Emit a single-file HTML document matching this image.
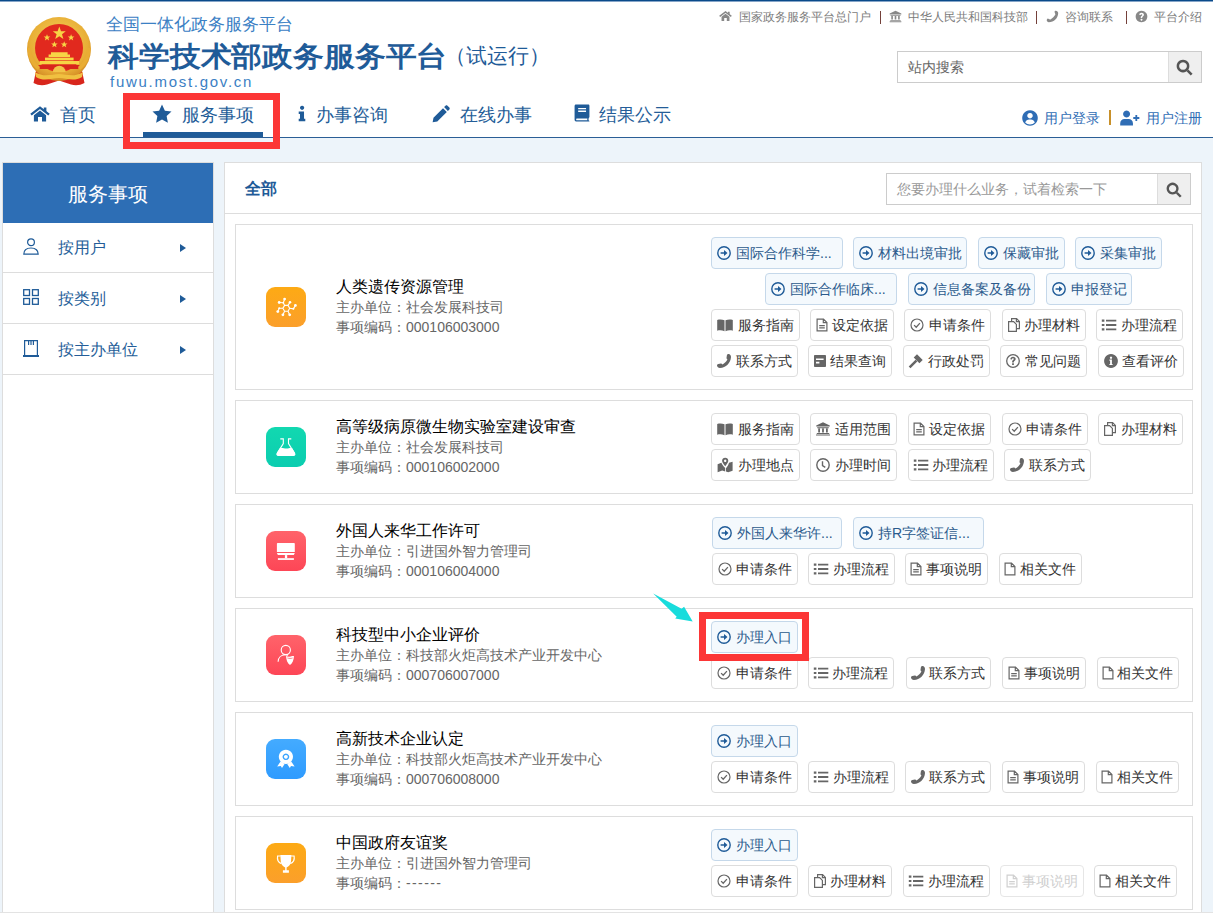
<!DOCTYPE html>
<html><head><meta charset="utf-8"><title>科学技术部政务服务平台</title>
<style>
html,body{margin:0;padding:0}
body{width:1213px;height:914px;overflow:hidden;position:relative;background:#edf4fa;font-family:'Liberation Sans',sans-serif;}
.t{position:absolute;white-space:nowrap}
.btn{position:absolute;height:32px;box-sizing:border-box;border-radius:4px;font-size:14px;line-height:14px;white-space:nowrap}
</style></head><body>
<div style="position:absolute;left:0;top:0;width:1213px;height:137px;background:#fff"></div><div style="position:absolute;left:0px;top:0px;width:1213px;height:1px;box-sizing:border-box;background:#0a4a8a"></div><div style="position:absolute;left:0px;top:1px;width:1213px;height:1px;box-sizing:border-box;background:#85a5c8"></div><div style="position:absolute;left:0px;top:137px;width:1213px;height:1px;box-sizing:border-box;background:#2a5e96"></div><svg style="position:absolute;left:20px;top:12px" width="80" height="80" viewBox="20 12 80 80">
<defs><radialGradient id="gold" cx="50%" cy="40%" r="60%"><stop offset="0" stop-color="#f6d35c"/><stop offset="0.75" stop-color="#e8ae36"/><stop offset="1" stop-color="#d28a24"/></radialGradient></defs>
<path d="M37 66 L33.5 83 Q40 86.5 47 84.5 L59 80.5 L71 84.5 Q78 86.5 84.5 83 L81 66 Z" fill="#d8261c"/>
<circle cx="59" cy="49" r="32" fill="url(#gold)"/>
<circle cx="59" cy="48" r="24" fill="#e1291e"/>
<g fill="#f7d445">
<path d="M59.3 26.6 L61 31.2 L65.8 31.3 L62 34.3 L63.4 39 L59.3 36.3 L55.2 39 L56.6 34.3 L52.8 31.3 L57.6 31.2 Z"/>
<path d="M47 34.3 L47.9 36.5 L50.3 36.6 L48.4 38.1 L49.1 40.4 L47 39 L44.9 40.4 L45.6 38.1 L43.7 36.6 L46.1 36.5 Z"/>
<path d="M71.1 34.3 L72 36.5 L74.4 36.6 L72.5 38.1 L73.2 40.4 L71.1 39 L69 40.4 L69.7 38.1 L67.8 36.6 L70.2 36.5 Z"/>
<path d="M54.4 41.2 L55.3 43.4 L57.7 43.5 L55.8 45 L56.5 47.3 L54.4 45.9 L52.3 47.3 L53 45 L51.1 43.5 L53.5 43.4 Z"/>
<path d="M64.2 41.2 L65.1 43.4 L67.5 43.5 L65.6 45 L66.3 47.3 L64.2 45.9 L62.1 47.3 L62.8 45 L60.9 43.5 L63.3 43.4 Z"/>
<path d="M51 52.2 H67.6 V54.6 H70 V57 H48.6 V54.6 H51 Z"/>
<path d="M45 57.6 H73.6 V60.4 H45 Z"/>
<path d="M39.6 61 H79 V64.2 H39.6 Z"/>
</g>
<path d="M38 65 H80 L78 69 H40 Z" fill="#d8261c"/>
<path d="M53 72 A6.3 6.3 0 0 1 65.6 72 Z" fill="#f2c448"/>
<path d="M35 72 C44 78 52 74 59 74 C66 74 74 78 83 72 L82 77 C74 82 66 78 59 78 C52 78 44 82 36 77 Z" fill="#f0c040"/>
<path d="M27.5 48 C27.5 58 32 66 38 70 L40 67 C35 63 31 56 31 48 Z M90.5 48 C90.5 58 86 66 80 70 L78 67 C83 63 87 56 87 48 Z" fill="#e9ad34"/>
</svg><div class="t" style="left:106px;top:16px;font-size:17px;line-height:17px;color:#3b80c4;">全国一体化政务服务平台</div><div class="t" style="left:108px;top:42px;font-size:31px;line-height:31px;color:#1f5b98;font-weight:bold;transform:scale(0.995,0.906);transform-origin:0 0;">科学技术部政务服务平台</div><div class="t" style="left:445px;top:44.5px;font-size:21px;line-height:21px;color:#1f5b98;">（试运行）</div><div class="t" style="left:110px;top:74px;font-size:15px;line-height:15px;color:#3b80c4;letter-spacing:1.72px;">fuwu.most.gov.cn</div><svg style="position:absolute;left:719px;top:10px;" width="13" height="12" viewBox="0 0 20 16"><g fill="#888" color="#888"><path fill="none" stroke="currentColor" stroke-width="2.3" stroke-linejoin="miter" d="M1 8.6 L10 1.6 L19 8.6"/><path d="M3.9 9.2 L10 4.4 L16.1 9.2 V15.6 H12 V11 H8 V15.6 H3.9 Z M13.8 1.4 H16.4 V6 L13.8 4 Z"/></g></svg><div class="t" style="left:739px;top:11px;font-size:12px;line-height:12px;color:#7b7b7b;">国家政务服务平台总门户</div><div style="position:absolute;left:880px;top:11px;width:1px;height:13px;box-sizing:border-box;background:#74403a"></div><svg style="position:absolute;left:889px;top:10px;" width="13" height="13" viewBox="0 0 16 16"><g fill="#888" color="#888"><path d="M8 1 L0.8 4.2 V5.4 H15.2 V4.2 Z M1.8 6 H14.2 V7 H1.8 Z M2.8 7.4 H4.8 V11.8 H2.8 Z M7 7.4 H9 V11.8 H7 Z M11.2 7.4 H13.2 V11.8 H11.2 Z M1.6 12.3 H14.4 V13.3 H1.6 Z M0.8 13.8 H15.2 V15 H0.8 Z"/></g></svg><div class="t" style="left:908px;top:11px;font-size:12px;line-height:12px;color:#7b7b7b;">中华人民共和国科技部</div><div style="position:absolute;left:1036px;top:11px;width:1px;height:13px;box-sizing:border-box;background:#74403a"></div><svg style="position:absolute;left:1046px;top:10px;" width="13" height="13" viewBox="0 0 16 16"><g fill="#888" color="#888"><path d="M12.2 0.8 C13.6 0.9 15 2.2 15 3.6 C15 9.8 9.8 15 3.4 15 C2.1 15 0.9 13.7 0.9 12.6 C0.9 11.6 1.5 10.9 2.3 10.5 L4.9 11.6 C5.3 11.8 5.6 11.6 5.9 11.3 C8.2 10 10.1 8 11.3 5.8 C11.5 5.4 11.6 5.1 11.4 4.8 L10.4 2.3 C10.7 1.4 11.3 0.8 12.2 0.8 Z"/></g></svg><div class="t" style="left:1065px;top:11px;font-size:12px;line-height:12px;color:#7b7b7b;">咨询联系</div><div style="position:absolute;left:1126px;top:11px;width:1px;height:13px;box-sizing:border-box;background:#74403a"></div><svg style="position:absolute;left:1135px;top:10px;" width="13" height="13" viewBox="0 0 16 16"><g fill="#888" color="#888"><path fill-rule="evenodd" d="M8 0.8 A7.2 7.2 0 1 1 7.99 0.8 Z M8 10.9 A1.1 1.1 0 1 0 8.01 10.9 Z M5.1 5.9 L6.9 6.3 C7 5.6 7.4 5.2 8 5.2 C8.6 5.2 9 5.6 9 6.1 C9 7 7.1 7.2 7.1 9 V9.8 H8.9 V9.3 C8.9 8.2 11 7.8 11 5.9 C11 4.3 9.6 3.4 8 3.4 C6.4 3.4 5.3 4.4 5.1 5.9 Z"/></g></svg><div class="t" style="left:1154px;top:11px;font-size:12px;line-height:12px;color:#7b7b7b;">平台介绍</div><div style="position:absolute;left:897px;top:51px;width:305px;height:32px;box-sizing:border-box;border:1px solid #ccc;background:#fff"></div><div style="position:absolute;left:1168px;top:52px;width:33px;height:30px;box-sizing:border-box;background:#efefef;border-left:1px solid #ddd"></div><div class="t" style="left:908px;top:60px;font-size:14px;line-height:14px;color:#666;">站内搜索</div><svg style="position:absolute;left:1176px;top:59px;" width="17" height="17" viewBox="0 0 16 16"><g fill="#555" color="#555"><path fill-rule="evenodd" d="M6.6 0.6 A6 6 0 1 1 6.59 0.6 Z M6.6 3 A3.6 3.6 0 1 0 6.61 3 Z"/><path d="M9.9 11.6 L11.6 9.9 L15.6 13.9 L13.9 15.6 Z"/></g></svg><svg style="position:absolute;left:30px;top:106px;" width="20" height="16" viewBox="0 0 20 16"><g fill="#1f5b98" color="#1f5b98"><path fill="none" stroke="currentColor" stroke-width="2.3" stroke-linejoin="miter" d="M1 8.6 L10 1.6 L19 8.6"/><path d="M3.9 9.2 L10 4.4 L16.1 9.2 V15.6 H12 V11 H8 V15.6 H3.9 Z M13.8 1.4 H16.4 V6 L13.8 4 Z"/></g></svg><div class="t" style="left:60px;top:106px;font-size:18px;line-height:18px;color:#245d98;">首页</div><svg style="position:absolute;left:152px;top:104px;" width="20" height="20" viewBox="0 0 16 16"><g fill="#1f5b98" color="#1f5b98"><path d="M8 0.4 L10.3 5.3 L15.6 5.9 L11.7 9.6 L12.7 14.9 L8 12.3 L3.3 14.9 L4.3 9.6 L0.4 5.9 L5.7 5.3 Z"/></g></svg><div class="t" style="left:182px;top:106px;font-size:18px;line-height:18px;color:#245d98;">服务事项</div><svg style="position:absolute;left:297px;top:105px;" width="10" height="17" viewBox="0 0 9 16"><g fill="#1f5b98" color="#1f5b98"><path d="M4.6 0.6 A2 2 0 1 1 4.59 0.6 Z M1.4 6 H6.4 V13 H7.6 V15.4 H1.4 V13 H2.6 V8.4 H1.4 Z"/></g></svg><div class="t" style="left:316px;top:106px;font-size:18px;line-height:18px;color:#245d98;">办事咨询</div><svg style="position:absolute;left:432px;top:105px;" width="18" height="18" viewBox="0 0 17 17"><g fill="#1f5b98" color="#1f5b98"><path d="M0.6 16.4 L1.4 12 L10.4 3 L14 6.6 L5 15.6 Z M11.4 2 L12.8 0.6 C13.3 0.1 14.1 0.1 14.6 0.6 L16.4 2.4 C16.9 2.9 16.9 3.7 16.4 4.2 L15 5.6 Z"/></g></svg><div class="t" style="left:460px;top:106px;font-size:18px;line-height:18px;color:#245d98;">在线办事</div><svg style="position:absolute;left:573px;top:104px;" width="18" height="18" viewBox="0 0 16 16"><g fill="#1f5b98" color="#1f5b98"><path fill-rule="evenodd" d="M2.6 0.5 H13.6 C14.2 0.5 14.6 0.9 14.6 1.5 V11.6 C14.6 12 14.3 12.3 14 12.4 C13.7 13.2 13.7 14 14 14.7 C14.4 14.8 14.6 15.1 14.6 15.5 H2.8 C1.9 15.5 1.4 14.8 1.4 13.8 V1.8 C1.4 1.1 1.9 0.5 2.6 0.5 Z M3.4 12.8 C3 12.8 2.8 13.2 2.8 13.7 C2.8 14.2 3 14.5 3.4 14.5 H12.8 C12.6 13.9 12.6 13.3 12.8 12.8 Z M4.6 3.5 H11.6 V4.7 H4.6 Z M4.6 5.8 H11.6 V7 H4.6 Z"/></g></svg><div class="t" style="left:599px;top:106px;font-size:18px;line-height:18px;color:#245d98;">结果公示</div><div style="position:absolute;left:143px;top:132px;width:120px;height:5px;box-sizing:border-box;background:#1f5b98"></div><svg style="position:absolute;left:1022px;top:110px;" width="16" height="16" viewBox="0 0 16 16"><g fill="#2f6db5" color="#2f6db5"><path fill-rule="evenodd" d="M8 0.2 A7.8 7.8 0 1 1 7.99 0.2 Z M8 3 A2.7 2.7 0 1 0 8.01 3 Z M3.2 12.4 C4.4 13.7 6.1 14.4 8 14.4 C9.9 14.4 11.6 13.7 12.8 12.4 C12.2 10.6 10.6 9.5 8.9 9.5 H7.1 C5.4 9.5 3.8 10.6 3.2 12.4 Z"/></g></svg><div class="t" style="left:1044px;top:110.5px;font-size:14px;line-height:14px;color:#2f6db5;">用户登录</div><div style="position:absolute;left:1109px;top:110px;width:2px;height:15px;box-sizing:border-box;background:#c8902a"></div><svg style="position:absolute;left:1119px;top:109px;" width="21" height="17" viewBox="0 0 19.5 16"><g fill="#2f6db5" color="#2f6db5"><path d="M7 1.4 A3.3 3.3 0 1 1 6.99 1.4 Z M1 15.6 V13.6 C1 11 2.8 9.4 5 9.4 H9 C11.2 9.4 13 11 13 13.6 V15.6 Z M15.3 5.6 H17 V7.6 H19 V9.3 H17 V11.3 H15.3 V9.3 H13.3 V7.6 H15.3 Z"/></g></svg><div class="t" style="left:1146px;top:110.5px;font-size:14px;line-height:14px;color:#2f6db5;">用户注册</div><div style="position:absolute;left:123px;top:93px;width:157px;height:56px;box-sizing:border-box;border:7px solid #fc3636"></div><div style="position:absolute;left:2px;top:162px;width:212px;height:751px;box-sizing:border-box;background:#fff;border:1px solid #ddd"></div><div style="position:absolute;left:3px;top:163px;width:210px;height:60px;box-sizing:border-box;background:#2d6eb5"></div><div class="t" style="left:68px;top:184px;font-size:20px;line-height:20px;color:#fff;">服务事项</div><div style="position:absolute;left:3px;top:272px;width:210px;height:1px;box-sizing:border-box;background:#ddd"></div><div class="t" style="left:58px;top:240px;font-size:16px;line-height:16px;color:#245d98;">按用户</div><svg style="position:absolute;left:180px;top:244px;" width="6" height="8" viewBox="0 0 6 8"><path d="M0 0 L6 4 L0 8 Z" fill="#1f5b98"/></svg><div style="position:absolute;left:3px;top:323px;width:210px;height:1px;box-sizing:border-box;background:#ddd"></div><div class="t" style="left:58px;top:291px;font-size:16px;line-height:16px;color:#245d98;">按类别</div><svg style="position:absolute;left:180px;top:295px;" width="6" height="8" viewBox="0 0 6 8"><path d="M0 0 L6 4 L0 8 Z" fill="#1f5b98"/></svg><div style="position:absolute;left:3px;top:374px;width:210px;height:1px;box-sizing:border-box;background:#ddd"></div><div class="t" style="left:58px;top:342px;font-size:16px;line-height:16px;color:#245d98;">按主办单位</div><svg style="position:absolute;left:180px;top:346px;" width="6" height="8" viewBox="0 0 6 8"><path d="M0 0 L6 4 L0 8 Z" fill="#1f5b98"/></svg><svg style="position:absolute;left:23px;top:238px;" width="16" height="17" viewBox="0 0 16 17"><g fill="none" stroke="#1f5b98" stroke-width="1.2"><circle cx="8" cy="4.2" r="3.4"/><path d="M0.8 16.2 C0.8 12 4 10 8 10 C12 10 15.2 12 15.2 16.2 Z"/></g></svg><svg style="position:absolute;left:23px;top:289px;" width="16" height="16" viewBox="0 0 16 16"><g fill="none" stroke="#1f5b98" stroke-width="1.3"><rect x="0.7" y="0.7" width="5.8" height="5.8"/><rect x="9.5" y="0.7" width="5.8" height="5.8"/><rect x="0.7" y="9.5" width="5.8" height="5.8"/><rect x="9.5" y="9.5" width="5.8" height="5.8"/></g></svg><svg style="position:absolute;left:23px;top:340px;" width="16" height="17" viewBox="0 0 16 17"><g fill="none" stroke="#1f5b98" stroke-width="1.2"><path d="M1.6 15.6 V0.6 H14.4 V15.6"/><path d="M5.6 1 V5 M8 1 V5 M10.4 1 V5"/></g><rect x="0" y="15" width="16" height="2" fill="#1f5b98"/></svg><div style="position:absolute;left:224px;top:162px;width:978px;height:751px;box-sizing:border-box;background:#fff;border:1px solid #ddd"></div><div style="position:absolute;left:225px;top:213px;width:976px;height:1px;box-sizing:border-box;background:#ddd"></div><div class="t" style="left:245px;top:180.5px;font-size:16px;line-height:16px;color:#1f5b98;font-weight:bold;">全部</div><div style="position:absolute;left:886px;top:173px;width:305px;height:32px;box-sizing:border-box;border:1px solid #ccc;background:#fff"></div><div style="position:absolute;left:1157px;top:174px;width:33px;height:30px;box-sizing:border-box;background:#efefef;border-left:1px solid #ddd"></div><div class="t" style="left:897px;top:182px;font-size:14px;line-height:14px;color:#999;">您要办理什么业务，试着检索一下</div><svg style="position:absolute;left:1166px;top:182px;" width="16" height="16" viewBox="0 0 16 16"><g fill="#555" color="#555"><path fill-rule="evenodd" d="M6.6 0.6 A6 6 0 1 1 6.59 0.6 Z M6.6 3 A3.6 3.6 0 1 0 6.61 3 Z"/><path d="M9.9 11.6 L11.6 9.9 L15.6 13.9 L13.9 15.6 Z"/></g></svg><div style="position:absolute;left:0px;top:912px;width:1213px;height:1px;box-sizing:border-box;background:#e3e3e3"></div><div style="position:absolute;left:0px;top:913px;width:1213px;height:1px;box-sizing:border-box;background:#fff"></div><div style="position:absolute;left:235px;top:224px;width:958px;height:166px;box-sizing:border-box;border:1px solid #ddd;background:#fff"></div><div style="position:absolute;left:266px;top:287px;width:40px;height:40px;border-radius:9px;background:linear-gradient(#fdaa14,#fb9f2b)"><svg width="40" height="40" viewBox="0 0 40 40"><g stroke="#fff" stroke-width="1.1" fill="none"><path d="M23.7 21.3 L22 18.4 L18.6 18.4 L16.9 21.3 L18.6 24.2 L22 24.2 Z"/><path d="M18.6 18.4 L17.3 15.8 L18.6 12.1 M17.3 15.8 L13.2 15.5 M22 18.4 L24 15.2 M23.7 21.3 L27.4 21.8 L29.4 18.4 M16.9 21.3 L13.2 21.2 L11.8 24.6 M18.6 24.2 L16.9 27.8 M22 24.2 L23.7 27.8"/></g><g fill="#fff"><circle cx="18.6" cy="12.1" r="1.4"/><circle cx="13.2" cy="15.5" r="1.4"/><circle cx="24" cy="15.2" r="1.3"/><circle cx="29.4" cy="18.4" r="1.4"/><circle cx="27.4" cy="21.8" r="1"/><circle cx="13.2" cy="21.2" r="1"/><circle cx="11.8" cy="24.6" r="1.4"/><circle cx="16.9" cy="27.8" r="1.4"/><circle cx="23.7" cy="27.8" r="1.4"/><circle cx="17.3" cy="15.8" r="0.9"/></g></svg></div><div class="t" style="left:336px;top:279px;font-size:16px;line-height:16px;color:#000;">人类遗传资源管理</div><div class="t" style="left:336px;top:300px;font-size:14px;line-height:14px;color:#666;">主办单位：社会发展科技司</div><div class="t" style="left:336px;top:320px;font-size:14px;line-height:14px;color:#666;">事项编码：000106003000</div><div class="btn" style="left:711px;top:237px;width:132px;border:1px solid #c5d8ea;background:#f4f9fd;color:#2b5a8c;"><svg width="16" height="16" viewBox="0 0 16 16" style="position:absolute;left:4.0px;top:7px"><g fill="#1f5b98" color="#1f5b98"><circle cx="8" cy="8" r="6.2" fill="none" stroke="currentColor" stroke-width="1.4"/><path d="M4.6 7.2 H8 V5 L11.5 8 L8 11 V8.8 H4.6 Z"/></g></svg><span style="position:absolute;left:24px;top:8px">国际合作科学...</span></div><div class="btn" style="left:853px;top:237px;width:114px;border:1px solid #c5d8ea;background:#f4f9fd;color:#2b5a8c;"><svg width="16" height="16" viewBox="0 0 16 16" style="position:absolute;left:4.0px;top:7px"><g fill="#1f5b98" color="#1f5b98"><circle cx="8" cy="8" r="6.2" fill="none" stroke="currentColor" stroke-width="1.4"/><path d="M4.6 7.2 H8 V5 L11.5 8 L8 11 V8.8 H4.6 Z"/></g></svg><span style="position:absolute;left:24px;top:8px">材料出境审批</span></div><div class="btn" style="left:978px;top:237px;width:87px;border:1px solid #c5d8ea;background:#f4f9fd;color:#2b5a8c;"><svg width="16" height="16" viewBox="0 0 16 16" style="position:absolute;left:4.0px;top:7px"><g fill="#1f5b98" color="#1f5b98"><circle cx="8" cy="8" r="6.2" fill="none" stroke="currentColor" stroke-width="1.4"/><path d="M4.6 7.2 H8 V5 L11.5 8 L8 11 V8.8 H4.6 Z"/></g></svg><span style="position:absolute;left:24px;top:8px">保藏审批</span></div><div class="btn" style="left:1075px;top:237px;width:87px;border:1px solid #c5d8ea;background:#f4f9fd;color:#2b5a8c;"><svg width="16" height="16" viewBox="0 0 16 16" style="position:absolute;left:4.0px;top:7px"><g fill="#1f5b98" color="#1f5b98"><circle cx="8" cy="8" r="6.2" fill="none" stroke="currentColor" stroke-width="1.4"/><path d="M4.6 7.2 H8 V5 L11.5 8 L8 11 V8.8 H4.6 Z"/></g></svg><span style="position:absolute;left:24px;top:8px">采集审批</span></div><div class="btn" style="left:765px;top:273px;width:132px;border:1px solid #c5d8ea;background:#f4f9fd;color:#2b5a8c;"><svg width="16" height="16" viewBox="0 0 16 16" style="position:absolute;left:4.0px;top:7px"><g fill="#1f5b98" color="#1f5b98"><circle cx="8" cy="8" r="6.2" fill="none" stroke="currentColor" stroke-width="1.4"/><path d="M4.6 7.2 H8 V5 L11.5 8 L8 11 V8.8 H4.6 Z"/></g></svg><span style="position:absolute;left:24px;top:8px">国际合作临床...</span></div><div class="btn" style="left:908px;top:273px;width:127px;border:1px solid #c5d8ea;background:#f4f9fd;color:#2b5a8c;"><svg width="16" height="16" viewBox="0 0 16 16" style="position:absolute;left:4.0px;top:7px"><g fill="#1f5b98" color="#1f5b98"><circle cx="8" cy="8" r="6.2" fill="none" stroke="currentColor" stroke-width="1.4"/><path d="M4.6 7.2 H8 V5 L11.5 8 L8 11 V8.8 H4.6 Z"/></g></svg><span style="position:absolute;left:24px;top:8px">信息备案及备份</span></div><div class="btn" style="left:1046px;top:273px;width:86px;border:1px solid #c5d8ea;background:#f4f9fd;color:#2b5a8c;"><svg width="16" height="16" viewBox="0 0 16 16" style="position:absolute;left:4.0px;top:7px"><g fill="#1f5b98" color="#1f5b98"><circle cx="8" cy="8" r="6.2" fill="none" stroke="currentColor" stroke-width="1.4"/><path d="M4.6 7.2 H8 V5 L11.5 8 L8 11 V8.8 H4.6 Z"/></g></svg><span style="position:absolute;left:24px;top:8px">申报登记</span></div><div class="btn" style="left:711px;top:309px;width:89px;border:1px solid #ddd;background:#fff;color:#333;"><svg width="16" height="16" viewBox="0 0 16 16" style="position:absolute;left:5.0px;top:7px"><g fill="#666" color="#666"><path d="M0.2 2.9 C2.7 2.1 5.2 2.3 7.5 3.2 V14.2 C5.2 13.2 2.7 13 0.2 13.7 Z M8.5 3.2 C10.8 2.3 13.3 2.1 15.8 2.9 V13.7 C13.3 13 10.8 13.2 8.5 14.2 Z"/></g></svg><span style="position:absolute;left:26px;top:8px">服务指南</span></div><div class="btn" style="left:810px;top:309px;width:84px;border:1px solid #ddd;background:#fff;color:#333;"><svg width="16" height="16" viewBox="0 0 16 16" style="position:absolute;left:2.5px;top:7px"><g fill="#666" color="#666"><path fill="none" stroke="currentColor" stroke-width="1.2" d="M3.1 2.1 H9.5 L12.9 5.5 V13.9 H3.1 Z M9.3 2.1 V5.7 H12.9"/><path d="M5.2 8 H10.8 V9.2 H5.2 Z M5.2 10.3 H10.8 V11.5 H5.2 Z"/></g></svg><span style="position:absolute;left:21px;top:8px">设定依据</span></div><div class="btn" style="left:904px;top:309px;width:87px;border:1px solid #ddd;background:#fff;color:#333;"><svg width="16" height="16" viewBox="0 0 16 16" style="position:absolute;left:4.0px;top:7px"><g fill="#666" color="#666"><circle cx="8" cy="8" r="6" fill="none" stroke="currentColor" stroke-width="1.2"/><path fill="none" stroke="currentColor" stroke-width="1.3" d="M5.1 8.1 L7.2 10.2 L10.9 6.1"/></g></svg><span style="position:absolute;left:24px;top:8px">申请条件</span></div><div class="btn" style="left:1002px;top:309px;width:84px;border:1px solid #ddd;background:#fff;color:#333;"><svg width="16" height="16" viewBox="0 0 16 16" style="position:absolute;left:2.5px;top:7px"><g fill="#666" color="#666"><path fill="none" stroke="currentColor" stroke-width="1.2" d="M5.6 4.4 V1.6 H10.6 L13.4 4.4 V11.6 H10.4 M10.4 1.6 V4.6 H13.4 M2.6 4.6 H7.6 L10.4 7.4 V14.4 H2.6 Z"/></g></svg><span style="position:absolute;left:21px;top:8px">办理材料</span></div><div class="btn" style="left:1096px;top:309px;width:87px;border:1px solid #ddd;background:#fff;color:#333;"><svg width="16" height="16" viewBox="0 0 16 16" style="position:absolute;left:4.0px;top:7px"><g fill="#666" color="#666"><path d="M0.8 2.5 H3.4 V4.7 H0.8 Z M0.8 6.9 H3.4 V9.1 H0.8 Z M0.8 11.3 H3.4 V13.5 H0.8 Z M5 2.7 H15.3 V4.5 H5 Z M5 7.1 H15.3 V8.9 H5 Z M5 11.5 H15.3 V13.3 H5 Z"/></g></svg><span style="position:absolute;left:24px;top:8px">办理流程</span></div><div class="btn" style="left:711px;top:345px;width:87px;border:1px solid #ddd;background:#fff;color:#333;"><svg width="16" height="16" viewBox="0 0 16 16" style="position:absolute;left:4.0px;top:7px"><g fill="#666" color="#666"><path d="M12.6 1 C14 1.2 15 2.4 15 3.9 C14.6 10 10 14.6 3.9 15 C2.4 15 1.2 14 1 12.6 C1 11.8 1.5 11.1 2.3 10.9 L4.9 10.5 C5.5 10.4 6 10.8 6.3 11.4 C8.7 10.4 10.4 8.7 11.4 6.3 C10.8 6 10.4 5.5 10.5 4.9 L10.9 2.3 C11.1 1.5 11.8 1 12.6 1 Z"/></g></svg><span style="position:absolute;left:24px;top:8px">联系方式</span></div><div class="btn" style="left:808px;top:345px;width:84px;border:1px solid #ddd;background:#fff;color:#333;"><svg width="16" height="16" viewBox="0 0 16 16" style="position:absolute;left:2.5px;top:7px"><g fill="#666" color="#666"><path fill-rule="evenodd" d="M2.8 2 H13.2 C13.6 2 14 2.4 14 2.8 V13.2 C14 13.6 13.6 14 13.2 14 H2.8 C2.4 14 2 13.6 2 13.2 V2.8 C2 2.4 2.4 2 2.8 2 Z M4 5.4 V7 H11.6 V5.4 Z M4 8.8 V10.4 H7.4 V8.8 Z"/></g></svg><span style="position:absolute;left:21px;top:8px">结果查询</span></div><div class="btn" style="left:903px;top:345px;width:87px;border:1px solid #ddd;background:#fff;color:#333;"><svg width="16" height="16" viewBox="0 0 16 16" style="position:absolute;left:4.0px;top:7px"><g fill="#666" color="#666"><path d="M9 1.3 L14.7 7 L11.4 10.3 L5.7 4.6 Z M9.3 8.5 L2.5 15.3 L0.7 13.5 L7.5 6.7 Z"/></g></svg><span style="position:absolute;left:24px;top:8px">行政处罚</span></div><div class="btn" style="left:1000px;top:345px;width:87px;border:1px solid #ddd;background:#fff;color:#333;"><svg width="16" height="16" viewBox="0 0 16 16" style="position:absolute;left:4.0px;top:7px"><g fill="#666" color="#666"><circle cx="8" cy="8" r="6.3" fill="none" stroke="currentColor" stroke-width="1.3"/><path d="M7.1 10.3 H8.9 V12 H7.1 Z M5.3 6.3 C5.4 4.7 6.5 3.8 8 3.8 C9.6 3.8 10.7 4.8 10.7 6 C10.7 7.6 8.9 7.8 8.9 9 V9.4 H7.1 V8.8 C7.1 7.2 8.9 7 8.9 6.1 C8.9 5.6 8.5 5.3 8 5.3 C7.4 5.3 7 5.8 7 6.5 Z"/></g></svg><span style="position:absolute;left:24px;top:8px">常见问题</span></div><div class="btn" style="left:1098px;top:345px;width:86px;border:1px solid #ddd;background:#fff;color:#333;"><svg width="16" height="16" viewBox="0 0 16 16" style="position:absolute;left:3.5px;top:7px"><g fill="#666" color="#666"><path fill-rule="evenodd" d="M8 1.1 A6.9 6.9 0 1 1 7.99 1.1 Z M8 3.6 A1.15 1.15 0 1 0 8.01 3.6 Z M6.4 6.6 V7.7 H7.1 V11 H6.4 V12.1 H9.6 V11 H8.9 V6.6 Z"/></g></svg><span style="position:absolute;left:23px;top:8px">查看评价</span></div><div style="position:absolute;left:235px;top:400px;width:958px;height:94px;box-sizing:border-box;border:1px solid #ddd;background:#fff"></div><div style="position:absolute;left:266px;top:427px;width:40px;height:40px;border-radius:9px;background:linear-gradient(#12d8b0,#0bcdb0)"><svg width="40" height="40" viewBox="0 0 40 40"><g fill="none" stroke="#fff" stroke-width="1.1"><path d="M14.3 11.9 H17.3 V16.6 L11.2 26.4 C10.6 27.5 11.1 28.4 12.2 28.4 H27.6 C28.7 28.4 29.2 27.5 28.6 26.4 L22.5 16.6 V11.9 H25.3"/></g><path fill="#fff" d="M13.6 21.4 C16 20.2 18.4 21.8 20.6 21.6 C22.8 21.4 24 20.6 26.2 21.2 L28.8 25.8 C29.6 27.2 29 28.6 27.6 28.6 H12.2 C10.8 28.6 10.2 27.2 11 25.8 Z"/></svg></div><div class="t" style="left:336px;top:419px;font-size:16px;line-height:16px;color:#000;">高等级病原微生物实验室建设审查</div><div class="t" style="left:336px;top:440px;font-size:14px;line-height:14px;color:#666;">主办单位：社会发展科技司</div><div class="t" style="left:336px;top:460px;font-size:14px;line-height:14px;color:#666;">事项编码：000106002000</div><div class="btn" style="left:711px;top:413px;width:89px;border:1px solid #ddd;background:#fff;color:#333;"><svg width="16" height="16" viewBox="0 0 16 16" style="position:absolute;left:5.0px;top:7px"><g fill="#666" color="#666"><path d="M0.2 2.9 C2.7 2.1 5.2 2.3 7.5 3.2 V14.2 C5.2 13.2 2.7 13 0.2 13.7 Z M8.5 3.2 C10.8 2.3 13.3 2.1 15.8 2.9 V13.7 C13.3 13 10.8 13.2 8.5 14.2 Z"/></g></svg><span style="position:absolute;left:26px;top:8px">服务指南</span></div><div class="btn" style="left:810px;top:413px;width:87px;border:1px solid #ddd;background:#fff;color:#333;"><svg width="16" height="16" viewBox="0 0 16 16" style="position:absolute;left:4.0px;top:7px"><g fill="#666" color="#666"><path d="M8 1.3 L1.2 4.6 V5.6 H14.8 V4.6 Z M2.2 6.3 H13.8 V7.2 H2.2 Z M3.2 7.6 H5 V11.6 H3.2 Z M7.1 7.6 H8.9 V11.6 H7.1 Z M11 7.6 H12.8 V11.6 H11 Z M1.8 12 H14.2 V12.9 H1.8 Z M1 13.4 H15 V14.6 H1 Z"/></g></svg><span style="position:absolute;left:24px;top:8px">适用范围</span></div><div class="btn" style="left:908px;top:413px;width:83px;border:1px solid #ddd;background:#fff;color:#333;"><svg width="16" height="16" viewBox="0 0 16 16" style="position:absolute;left:2.0px;top:7px"><g fill="#666" color="#666"><path fill="none" stroke="currentColor" stroke-width="1.2" d="M3.1 2.1 H9.5 L12.9 5.5 V13.9 H3.1 Z M9.3 2.1 V5.7 H12.9"/><path d="M5.2 8 H10.8 V9.2 H5.2 Z M5.2 10.3 H10.8 V11.5 H5.2 Z"/></g></svg><span style="position:absolute;left:20px;top:8px">设定依据</span></div><div class="btn" style="left:1002px;top:413px;width:86px;border:1px solid #ddd;background:#fff;color:#333;"><svg width="16" height="16" viewBox="0 0 16 16" style="position:absolute;left:3.5px;top:7px"><g fill="#666" color="#666"><circle cx="8" cy="8" r="6" fill="none" stroke="currentColor" stroke-width="1.2"/><path fill="none" stroke="currentColor" stroke-width="1.3" d="M5.1 8.1 L7.2 10.2 L10.9 6.1"/></g></svg><span style="position:absolute;left:23px;top:8px">申请条件</span></div><div class="btn" style="left:1098px;top:413px;width:85px;border:1px solid #ddd;background:#fff;color:#333;"><svg width="16" height="16" viewBox="0 0 16 16" style="position:absolute;left:3.0px;top:7px"><g fill="#666" color="#666"><path fill="none" stroke="currentColor" stroke-width="1.2" d="M5.6 4.4 V1.6 H10.6 L13.4 4.4 V11.6 H10.4 M10.4 1.6 V4.6 H13.4 M2.6 4.6 H7.6 L10.4 7.4 V14.4 H2.6 Z"/></g></svg><span style="position:absolute;left:22px;top:8px">办理材料</span></div><div class="btn" style="left:711px;top:449px;width:89px;border:1px solid #ddd;background:#fff;color:#333;"><svg width="16" height="16" viewBox="0 0 16 16" style="position:absolute;left:5.0px;top:7px"><g fill="#666" color="#666"><path fill-rule="evenodd" d="M8.2 0.8 C10 0.8 11.3 2.1 11.3 3.8 C11.3 5.4 9.8 7.2 8.2 9.2 C6.6 7.2 5.1 5.4 5.1 3.8 C5.1 2.1 6.4 0.8 8.2 0.8 Z M8.2 2.6 A1.2 1.2 0 1 0 8.21 2.6 Z"/><path d="M0.6 7.2 L4.4 5.8 C4.8 7.2 6 8.8 8.2 11 L8.2 14.6 L5.2 13.4 L0.6 15.2 Z M12 5.8 L15.6 4.8 V13.8 L11.2 15.2 L9 14.6 V11.2 C10.6 9.4 11.6 7.6 12 5.8 Z"/></g></svg><span style="position:absolute;left:26px;top:8px">办理地点</span></div><div class="btn" style="left:810px;top:449px;width:87px;border:1px solid #ddd;background:#fff;color:#333;"><svg width="16" height="16" viewBox="0 0 16 16" style="position:absolute;left:4.0px;top:7px"><g fill="#666" color="#666"><circle cx="8" cy="8" r="6.2" fill="none" stroke="currentColor" stroke-width="1.4"/><path fill="none" stroke="currentColor" stroke-width="1.4" d="M7.5 4.2 V8.5 L10.3 10.3"/></g></svg><span style="position:absolute;left:24px;top:8px">办理时间</span></div><div class="btn" style="left:908px;top:449px;width:86px;border:1px solid #ddd;background:#fff;color:#333;"><svg width="16" height="16" viewBox="0 0 16 16" style="position:absolute;left:3.5px;top:7px"><g fill="#666" color="#666"><path d="M0.8 2.5 H3.4 V4.7 H0.8 Z M0.8 6.9 H3.4 V9.1 H0.8 Z M0.8 11.3 H3.4 V13.5 H0.8 Z M5 2.7 H15.3 V4.5 H5 Z M5 7.1 H15.3 V8.9 H5 Z M5 11.5 H15.3 V13.3 H5 Z"/></g></svg><span style="position:absolute;left:23px;top:8px">办理流程</span></div><div class="btn" style="left:1004px;top:449px;width:87px;border:1px solid #ddd;background:#fff;color:#333;"><svg width="16" height="16" viewBox="0 0 16 16" style="position:absolute;left:4.0px;top:7px"><g fill="#666" color="#666"><path d="M12.6 1 C14 1.2 15 2.4 15 3.9 C14.6 10 10 14.6 3.9 15 C2.4 15 1.2 14 1 12.6 C1 11.8 1.5 11.1 2.3 10.9 L4.9 10.5 C5.5 10.4 6 10.8 6.3 11.4 C8.7 10.4 10.4 8.7 11.4 6.3 C10.8 6 10.4 5.5 10.5 4.9 L10.9 2.3 C11.1 1.5 11.8 1 12.6 1 Z"/></g></svg><span style="position:absolute;left:24px;top:8px">联系方式</span></div><div style="position:absolute;left:235px;top:504px;width:958px;height:94px;box-sizing:border-box;border:1px solid #ddd;background:#fff"></div><div style="position:absolute;left:266px;top:531px;width:40px;height:40px;border-radius:9px;background:linear-gradient(#ff636a,#fd4656)"><svg width="40" height="40" viewBox="0 0 40 40"><g fill="#fff"><path d="M11.9 12.1 H27.8 C28.4 12.1 28.8 12.5 28.8 13.1 V20.9 H10.9 V13.1 C10.9 12.5 11.3 12.1 11.9 12.1 Z"/><path d="M10.9 22.1 H28.8 L27.8 24.1 H11.9 Z"/><rect x="18.9" y="24.1" width="2.3" height="3.2"/><rect x="11.9" y="27.2" width="16" height="1.7"/></g></svg></div><div class="t" style="left:336px;top:523px;font-size:16px;line-height:16px;color:#000;">外国人来华工作许可</div><div class="t" style="left:336px;top:544px;font-size:14px;line-height:14px;color:#666;">主办单位：引进国外智力管理司</div><div class="t" style="left:336px;top:564px;font-size:14px;line-height:14px;color:#666;">事项编码：000106004000</div><div class="btn" style="left:712px;top:517px;width:130px;border:1px solid #c5d8ea;background:#f4f9fd;color:#2b5a8c;"><svg width="16" height="16" viewBox="0 0 16 16" style="position:absolute;left:4.0px;top:7px"><g fill="#1f5b98" color="#1f5b98"><circle cx="8" cy="8" r="6.2" fill="none" stroke="currentColor" stroke-width="1.4"/><path d="M4.6 7.2 H8 V5 L11.5 8 L8 11 V8.8 H4.6 Z"/></g></svg><span style="position:absolute;left:24px;top:8px">外国人来华许...</span></div><div class="btn" style="left:853px;top:517px;width:131px;border:1px solid #c5d8ea;background:#f4f9fd;color:#2b5a8c;"><svg width="16" height="16" viewBox="0 0 16 16" style="position:absolute;left:4.0px;top:7px"><g fill="#1f5b98" color="#1f5b98"><circle cx="8" cy="8" r="6.2" fill="none" stroke="currentColor" stroke-width="1.4"/><path d="M4.6 7.2 H8 V5 L11.5 8 L8 11 V8.8 H4.6 Z"/></g></svg><span style="position:absolute;left:24px;top:8px">持R字签证信...</span></div><div class="btn" style="left:712px;top:553px;width:86px;border:1px solid #ddd;background:#fff;color:#333;"><svg width="16" height="16" viewBox="0 0 16 16" style="position:absolute;left:3.5px;top:7px"><g fill="#666" color="#666"><circle cx="8" cy="8" r="6" fill="none" stroke="currentColor" stroke-width="1.2"/><path fill="none" stroke="currentColor" stroke-width="1.3" d="M5.1 8.1 L7.2 10.2 L10.9 6.1"/></g></svg><span style="position:absolute;left:23px;top:8px">申请条件</span></div><div class="btn" style="left:808px;top:553px;width:87px;border:1px solid #ddd;background:#fff;color:#333;"><svg width="16" height="16" viewBox="0 0 16 16" style="position:absolute;left:4.0px;top:7px"><g fill="#666" color="#666"><path d="M0.8 2.5 H3.4 V4.7 H0.8 Z M0.8 6.9 H3.4 V9.1 H0.8 Z M0.8 11.3 H3.4 V13.5 H0.8 Z M5 2.7 H15.3 V4.5 H5 Z M5 7.1 H15.3 V8.9 H5 Z M5 11.5 H15.3 V13.3 H5 Z"/></g></svg><span style="position:absolute;left:24px;top:8px">办理流程</span></div><div class="btn" style="left:905px;top:553px;width:83px;border:1px solid #ddd;background:#fff;color:#333;"><svg width="16" height="16" viewBox="0 0 16 16" style="position:absolute;left:2.0px;top:7px"><g fill="#666" color="#666"><path fill="none" stroke="currentColor" stroke-width="1.2" d="M3.1 2.1 H9.5 L12.9 5.5 V13.9 H3.1 Z M9.3 2.1 V5.7 H12.9"/><path d="M5.2 8 H10.8 V9.2 H5.2 Z M5.2 10.3 H10.8 V11.5 H5.2 Z"/></g></svg><span style="position:absolute;left:20px;top:8px">事项说明</span></div><div class="btn" style="left:999px;top:553px;width:83px;border:1px solid #ddd;background:#fff;color:#333;"><svg width="16" height="16" viewBox="0 0 16 16" style="position:absolute;left:2.0px;top:7px"><g fill="#666" color="#666"><path fill="none" stroke="currentColor" stroke-width="1.2" d="M3.1 2.1 H9.5 L12.9 5.5 V13.9 H3.1 Z M9.3 2.1 V5.7 H12.9"/></g></svg><span style="position:absolute;left:20px;top:8px">相关文件</span></div><div style="position:absolute;left:235px;top:608px;width:958px;height:94px;box-sizing:border-box;border:1px solid #ddd;background:#fff"></div><div style="position:absolute;left:266px;top:635px;width:40px;height:40px;border-radius:9px;background:linear-gradient(#ff636a,#fd4656)"><svg width="40" height="40" viewBox="0 0 40 40"><g fill="none" stroke="#fff" stroke-width="1.1"><circle cx="19.8" cy="15" r="4.6"/><path d="M12.1 26.8 C12.3 22.4 15.4 19.8 19.4 19.8 C20.4 19.8 21.2 19.9 22 20.2"/></g><path fill="#fff" d="M20 20.9 C21.6 22 24.6 22 26.2 20.9 L28 20.9 C27.6 25.2 26.6 28 24 30 C21.4 28 20.4 25.2 20 20.9 Z"/><path fill="none" stroke="#fd4c5b" stroke-width="0.7" d="M21.4 23 C23 23.6 25 23.6 26.6 23"/></svg></div><div class="t" style="left:336px;top:627px;font-size:16px;line-height:16px;color:#000;">科技型中小企业评价</div><div class="t" style="left:336px;top:648px;font-size:14px;line-height:14px;color:#666;">主办单位：科技部火炬高技术产业开发中心</div><div class="t" style="left:336px;top:668px;font-size:14px;line-height:14px;color:#666;">事项编码：000706007000</div><div class="btn" style="left:711px;top:621px;width:87px;border:1px solid #c5d8ea;background:#f4f9fd;color:#2b5a8c;"><svg width="16" height="16" viewBox="0 0 16 16" style="position:absolute;left:4.0px;top:7px"><g fill="#1f5b98" color="#1f5b98"><circle cx="8" cy="8" r="6.2" fill="none" stroke="currentColor" stroke-width="1.4"/><path d="M4.6 7.2 H8 V5 L11.5 8 L8 11 V8.8 H4.6 Z"/></g></svg><span style="position:absolute;left:24px;top:8px">办理入口</span></div><div class="btn" style="left:711px;top:657px;width:87px;border:1px solid #ddd;background:#fff;color:#333;"><svg width="16" height="16" viewBox="0 0 16 16" style="position:absolute;left:4.0px;top:7px"><g fill="#666" color="#666"><circle cx="8" cy="8" r="6" fill="none" stroke="currentColor" stroke-width="1.2"/><path fill="none" stroke="currentColor" stroke-width="1.3" d="M5.1 8.1 L7.2 10.2 L10.9 6.1"/></g></svg><span style="position:absolute;left:24px;top:8px">申请条件</span></div><div class="btn" style="left:808px;top:657px;width:86px;border:1px solid #ddd;background:#fff;color:#333;"><svg width="16" height="16" viewBox="0 0 16 16" style="position:absolute;left:3.5px;top:7px"><g fill="#666" color="#666"><path d="M0.8 2.5 H3.4 V4.7 H0.8 Z M0.8 6.9 H3.4 V9.1 H0.8 Z M0.8 11.3 H3.4 V13.5 H0.8 Z M5 2.7 H15.3 V4.5 H5 Z M5 7.1 H15.3 V8.9 H5 Z M5 11.5 H15.3 V13.3 H5 Z"/></g></svg><span style="position:absolute;left:23px;top:8px">办理流程</span></div><div class="btn" style="left:906px;top:657px;width:85px;border:1px solid #ddd;background:#fff;color:#333;"><svg width="16" height="16" viewBox="0 0 16 16" style="position:absolute;left:3.0px;top:7px"><g fill="#666" color="#666"><path d="M12.6 1 C14 1.2 15 2.4 15 3.9 C14.6 10 10 14.6 3.9 15 C2.4 15 1.2 14 1 12.6 C1 11.8 1.5 11.1 2.3 10.9 L4.9 10.5 C5.5 10.4 6 10.8 6.3 11.4 C8.7 10.4 10.4 8.7 11.4 6.3 C10.8 6 10.4 5.5 10.5 4.9 L10.9 2.3 C11.1 1.5 11.8 1 12.6 1 Z"/></g></svg><span style="position:absolute;left:22px;top:8px">联系方式</span></div><div class="btn" style="left:1002px;top:657px;width:84px;border:1px solid #ddd;background:#fff;color:#333;"><svg width="16" height="16" viewBox="0 0 16 16" style="position:absolute;left:2.5px;top:7px"><g fill="#666" color="#666"><path fill="none" stroke="currentColor" stroke-width="1.2" d="M3.1 2.1 H9.5 L12.9 5.5 V13.9 H3.1 Z M9.3 2.1 V5.7 H12.9"/><path d="M5.2 8 H10.8 V9.2 H5.2 Z M5.2 10.3 H10.8 V11.5 H5.2 Z"/></g></svg><span style="position:absolute;left:21px;top:8px">事项说明</span></div><div class="btn" style="left:1097px;top:657px;width:82px;border:1px solid #ddd;background:#fff;color:#333;"><svg width="16" height="16" viewBox="0 0 16 16" style="position:absolute;left:1.5px;top:7px"><g fill="#666" color="#666"><path fill="none" stroke="currentColor" stroke-width="1.2" d="M3.1 2.1 H9.5 L12.9 5.5 V13.9 H3.1 Z M9.3 2.1 V5.7 H12.9"/></g></svg><span style="position:absolute;left:19px;top:8px">相关文件</span></div><div style="position:absolute;left:235px;top:712px;width:958px;height:94px;box-sizing:border-box;border:1px solid #ddd;background:#fff"></div><div style="position:absolute;left:266px;top:739px;width:40px;height:40px;border-radius:9px;background:linear-gradient(#44abff,#2e9bff)"><svg width="40" height="40" viewBox="0 0 40 40"><g fill="#fff"><path fill-rule="evenodd" d="M19.9 10.7 A7.1 7.1 0 1 1 19.89 10.7 Z M19.9 14.5 A3.3 3.3 0 1 0 19.91 14.5 Z M19.9 15.9 A1.9 1.9 0 1 1 19.89 15.9 Z"/><path d="M14.6 22.4 L18.6 24.9 L16 28.9 L14.8 27 L11.2 27.4 Z M25.2 22.4 L28.6 27.4 L25 27 L23.8 28.9 L21.2 24.9 Z"/></g></svg></div><div class="t" style="left:336px;top:731px;font-size:16px;line-height:16px;color:#000;">高新技术企业认定</div><div class="t" style="left:336px;top:752px;font-size:14px;line-height:14px;color:#666;">主办单位：科技部火炬高技术产业开发中心</div><div class="t" style="left:336px;top:772px;font-size:14px;line-height:14px;color:#666;">事项编码：000706008000</div><div class="btn" style="left:711px;top:725px;width:87px;border:1px solid #c5d8ea;background:#f4f9fd;color:#2b5a8c;"><svg width="16" height="16" viewBox="0 0 16 16" style="position:absolute;left:4.0px;top:7px"><g fill="#1f5b98" color="#1f5b98"><circle cx="8" cy="8" r="6.2" fill="none" stroke="currentColor" stroke-width="1.4"/><path d="M4.6 7.2 H8 V5 L11.5 8 L8 11 V8.8 H4.6 Z"/></g></svg><span style="position:absolute;left:24px;top:8px">办理入口</span></div><div class="btn" style="left:711px;top:761px;width:87px;border:1px solid #ddd;background:#fff;color:#333;"><svg width="16" height="16" viewBox="0 0 16 16" style="position:absolute;left:4.0px;top:7px"><g fill="#666" color="#666"><circle cx="8" cy="8" r="6" fill="none" stroke="currentColor" stroke-width="1.2"/><path fill="none" stroke="currentColor" stroke-width="1.3" d="M5.1 8.1 L7.2 10.2 L10.9 6.1"/></g></svg><span style="position:absolute;left:24px;top:8px">申请条件</span></div><div class="btn" style="left:808px;top:761px;width:87px;border:1px solid #ddd;background:#fff;color:#333;"><svg width="16" height="16" viewBox="0 0 16 16" style="position:absolute;left:4.0px;top:7px"><g fill="#666" color="#666"><path d="M0.8 2.5 H3.4 V4.7 H0.8 Z M0.8 6.9 H3.4 V9.1 H0.8 Z M0.8 11.3 H3.4 V13.5 H0.8 Z M5 2.7 H15.3 V4.5 H5 Z M5 7.1 H15.3 V8.9 H5 Z M5 11.5 H15.3 V13.3 H5 Z"/></g></svg><span style="position:absolute;left:24px;top:8px">办理流程</span></div><div class="btn" style="left:905px;top:761px;width:86px;border:1px solid #ddd;background:#fff;color:#333;"><svg width="16" height="16" viewBox="0 0 16 16" style="position:absolute;left:3.5px;top:7px"><g fill="#666" color="#666"><path d="M12.6 1 C14 1.2 15 2.4 15 3.9 C14.6 10 10 14.6 3.9 15 C2.4 15 1.2 14 1 12.6 C1 11.8 1.5 11.1 2.3 10.9 L4.9 10.5 C5.5 10.4 6 10.8 6.3 11.4 C8.7 10.4 10.4 8.7 11.4 6.3 C10.8 6 10.4 5.5 10.5 4.9 L10.9 2.3 C11.1 1.5 11.8 1 12.6 1 Z"/></g></svg><span style="position:absolute;left:23px;top:8px">联系方式</span></div><div class="btn" style="left:1002px;top:761px;width:83px;border:1px solid #ddd;background:#fff;color:#333;"><svg width="16" height="16" viewBox="0 0 16 16" style="position:absolute;left:2.0px;top:7px"><g fill="#666" color="#666"><path fill="none" stroke="currentColor" stroke-width="1.2" d="M3.1 2.1 H9.5 L12.9 5.5 V13.9 H3.1 Z M9.3 2.1 V5.7 H12.9"/><path d="M5.2 8 H10.8 V9.2 H5.2 Z M5.2 10.3 H10.8 V11.5 H5.2 Z"/></g></svg><span style="position:absolute;left:20px;top:8px">事项说明</span></div><div class="btn" style="left:1096px;top:761px;width:83px;border:1px solid #ddd;background:#fff;color:#333;"><svg width="16" height="16" viewBox="0 0 16 16" style="position:absolute;left:2.0px;top:7px"><g fill="#666" color="#666"><path fill="none" stroke="currentColor" stroke-width="1.2" d="M3.1 2.1 H9.5 L12.9 5.5 V13.9 H3.1 Z M9.3 2.1 V5.7 H12.9"/></g></svg><span style="position:absolute;left:20px;top:8px">相关文件</span></div><div style="position:absolute;left:235px;top:816px;width:958px;height:94px;box-sizing:border-box;border:1px solid #ddd;background:#fff"></div><div style="position:absolute;left:266px;top:843px;width:40px;height:40px;border-radius:9px;background:linear-gradient(#fdaa14,#fb9f2b)"><svg width="40" height="40" viewBox="0 0 40 40"><g fill="#fff"><path d="M14.3 12.1 H25.4 L25 18.4 C24.8 21.4 22.8 23.2 20.6 24.6 V27.2 H22.9 V29.7 H16.9 V27.2 H19.2 V24.6 C17 23.2 15 21.4 14.8 18.4 Z"/></g><g fill="none" stroke="#fff" stroke-width="1.2"><path d="M14.6 13 H11.6 C11 16.6 12.4 19.6 15.4 20.6"/><path d="M25.1 13 H28.1 C28.7 16.6 27.3 19.6 24.3 20.6"/></g></svg></div><div class="t" style="left:336px;top:835px;font-size:16px;line-height:16px;color:#000;">中国政府友谊奖</div><div class="t" style="left:336px;top:856px;font-size:14px;line-height:14px;color:#666;">主办单位：引进国外智力管理司</div><div class="t" style="left:336px;top:876px;font-size:14px;line-height:14px;color:#666;">事项编码：<span style="letter-spacing:1.4px">------</span></div><div class="btn" style="left:711px;top:829px;width:87px;border:1px solid #c5d8ea;background:#f4f9fd;color:#2b5a8c;"><svg width="16" height="16" viewBox="0 0 16 16" style="position:absolute;left:4.0px;top:7px"><g fill="#1f5b98" color="#1f5b98"><circle cx="8" cy="8" r="6.2" fill="none" stroke="currentColor" stroke-width="1.4"/><path d="M4.6 7.2 H8 V5 L11.5 8 L8 11 V8.8 H4.6 Z"/></g></svg><span style="position:absolute;left:24px;top:8px">办理入口</span></div><div class="btn" style="left:711px;top:865px;width:87px;border:1px solid #ddd;background:#fff;color:#333;"><svg width="16" height="16" viewBox="0 0 16 16" style="position:absolute;left:4.0px;top:7px"><g fill="#666" color="#666"><circle cx="8" cy="8" r="6" fill="none" stroke="currentColor" stroke-width="1.2"/><path fill="none" stroke="currentColor" stroke-width="1.3" d="M5.1 8.1 L7.2 10.2 L10.9 6.1"/></g></svg><span style="position:absolute;left:24px;top:8px">申请条件</span></div><div class="btn" style="left:808px;top:865px;width:84px;border:1px solid #ddd;background:#fff;color:#333;"><svg width="16" height="16" viewBox="0 0 16 16" style="position:absolute;left:2.5px;top:7px"><g fill="#666" color="#666"><path fill="none" stroke="currentColor" stroke-width="1.2" d="M5.6 4.4 V1.6 H10.6 L13.4 4.4 V11.6 H10.4 M10.4 1.6 V4.6 H13.4 M2.6 4.6 H7.6 L10.4 7.4 V14.4 H2.6 Z"/></g></svg><span style="position:absolute;left:21px;top:8px">办理材料</span></div><div class="btn" style="left:903px;top:865px;width:87px;border:1px solid #ddd;background:#fff;color:#333;"><svg width="16" height="16" viewBox="0 0 16 16" style="position:absolute;left:4.0px;top:7px"><g fill="#666" color="#666"><path d="M0.8 2.5 H3.4 V4.7 H0.8 Z M0.8 6.9 H3.4 V9.1 H0.8 Z M0.8 11.3 H3.4 V13.5 H0.8 Z M5 2.7 H15.3 V4.5 H5 Z M5 7.1 H15.3 V8.9 H5 Z M5 11.5 H15.3 V13.3 H5 Z"/></g></svg><span style="position:absolute;left:24px;top:8px">办理流程</span></div><div class="btn" style="left:1000px;top:865px;width:84px;border:1px solid #e6e6e6;background:#fff;color:#cfcfcf;"><svg width="16" height="16" viewBox="0 0 16 16" style="position:absolute;left:2.5px;top:7px"><g fill="#d0d0d0" color="#d0d0d0"><path fill="none" stroke="currentColor" stroke-width="1.2" d="M3.1 2.1 H9.5 L12.9 5.5 V13.9 H3.1 Z M9.3 2.1 V5.7 H12.9"/><path d="M5.2 8 H10.8 V9.2 H5.2 Z M5.2 10.3 H10.8 V11.5 H5.2 Z"/></g></svg><span style="position:absolute;left:21px;top:8px">事项说明</span></div><div class="btn" style="left:1094px;top:865px;width:83px;border:1px solid #ddd;background:#fff;color:#333;"><svg width="16" height="16" viewBox="0 0 16 16" style="position:absolute;left:2.0px;top:7px"><g fill="#666" color="#666"><path fill="none" stroke="currentColor" stroke-width="1.2" d="M3.1 2.1 H9.5 L12.9 5.5 V13.9 H3.1 Z M9.3 2.1 V5.7 H12.9"/></g></svg><span style="position:absolute;left:20px;top:8px">相关文件</span></div><div style="position:absolute;left:699px;top:612px;width:110px;height:49px;box-sizing:border-box;border:7px solid #fc3636"></div><svg style="position:absolute;left:640px;top:585px;" width="60" height="45" viewBox="640 585 60 45"><path d="M653.2 593.4 L681.6 608.7 L684.1 606.8 L692.7 621.6 L675.2 618.6 L676.7 616.7 Z" fill="#18dcdc"/></svg>
</body></html>
